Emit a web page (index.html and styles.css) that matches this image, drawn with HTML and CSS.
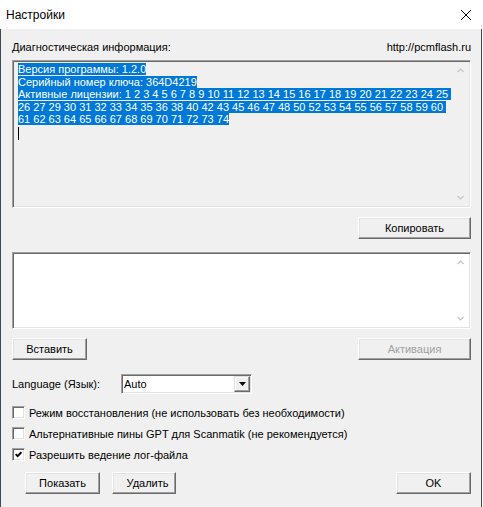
FILE: index.html
```html
<!DOCTYPE html>
<html lang="ru">
<head>
<meta charset="utf-8">
<title>Настройки</title>
<link rel="stylesheet" href="styles.css">
</head>
<body>
<div class="window">
  <div class="titlebar">
    <span class="title">Настройки</span>
    <svg class="close" width="10" height="10" viewBox="0 0 10 10"><path d="M0 0 L10 10 M10 0 L0 10" stroke="#000" stroke-width="1" fill="none"/></svg>
  </div>
  <div class="body">
    <div class="hdr"><span>Диагностическая информация:</span><span>http://pcmflash.ru</span></div>
    <div class="memo memo-info">
      <div class="memo-text">
        <div class="ln"><span class="sel">Версия программы: 1.2.0</span></div>
        <div class="ln"><span class="sel">Серийный номер ключа: 364D4219</span></div>
        <div class="ln"><span class="sel">Активные лицензии: 1 2 3 4 5 6 7 8 9 10 11 12 13 14 15 16 17 18 19 20 21 22 23 24 25 </span></div>
        <div class="ln"><span class="sel">26 27 29 30 31 32 33 34 35 36 38 40 42 43 45 46 47 48 50 52 53 54 55 56 57 58 59 60 </span></div>
        <div class="ln"><span class="sel">61 62 63 64 65 66 67 68 69 70 71 72 73 74</span></div>
        <div class="ln"><span class="caret"></span></div>
      </div>
      <div class="vscroll">
        <div class="arrow"><svg width="7" height="5" viewBox="0 0 7 5"><path d="M0.5 4 L3.5 1 L6.5 4" stroke="#c4c4c4" stroke-width="1.2" fill="none"/></svg></div>
        <div class="arrow"><svg width="7" height="5" viewBox="0 0 7 5"><path d="M0.5 1 L3.5 4 L6.5 1" stroke="#c4c4c4" stroke-width="1.2" fill="none"/></svg></div>
      </div>
    </div>
    <div class="row row-copy"><button class="btn w113">Копировать</button></div>
    <div class="memo memo-key">
      <div class="memo-text"></div>
      <div class="vscroll">
        <div class="arrow"><svg width="7" height="5" viewBox="0 0 7 5"><path d="M0.5 4 L3.5 1 L6.5 4" stroke="#c4c4c4" stroke-width="1.2" fill="none"/></svg></div>
        <div class="arrow"><svg width="7" height="5" viewBox="0 0 7 5"><path d="M0.5 1 L3.5 4 L6.5 1" stroke="#c4c4c4" stroke-width="1.2" fill="none"/></svg></div>
      </div>
    </div>
    <div class="row row-paste">
      <button class="btn w75">Вставить</button>
      <button class="btn w113" disabled>Активация</button>
    </div>
    <div class="lang">
      <span class="lang-label">Language (Язык):</span>
      <div class="combo sunken">
        <span class="combo-val">Auto</span>
        <div class="combo-btn"><svg width="7" height="4" viewBox="0 0 7 4"><path d="M0 0 L7 0 L3.5 4 Z" fill="#000"/></svg></div>
      </div>
    </div>
    <div class="check first"><span class="box sunken"></span><span>Режим восстановления (не использовать без необходимости)</span></div>
    <div class="check"><span class="box sunken"></span><span>Альтернативные пины GPT для Scanmatik (не рекомендуется)</span></div>
    <div class="check"><span class="box sunken"><svg width="7" height="7" viewBox="0 0 7 7"><path d="M0.6 3.2 L2.6 5.2 L6.4 1.2" stroke="#000" stroke-width="1.8" fill="none"/></svg></span><span>Разрешить ведение лог-файла</span></div>
    <div class="row row-bottom">
      <div class="group">
        <button class="btn w75">Показать</button>
        <button class="btn w64">Удалить</button>
      </div>
      <button class="btn w75">OK</button>
    </div>
  </div>
</div>
</body>
</html>
```
FILE: styles.css
```css
html, body {
  margin: 0;
  background: #fff;
}
.window {
  width: 482px;
  height: 507px;
  display: flex;
  flex-direction: column;
  font-family: "Liberation Sans", Arial, sans-serif;
  font-size: 11px;
  color: #000;
}
.titlebar {
  height: 29px;
  flex: none;
  display: flex;
  align-items: center;
  justify-content: space-between;
  padding: 0 11px 0 6px;
  background: #fff;
}
.title {
  font-size: 12px;
}
.close {
  display: block;
}
.body {
  flex: 1;
  background: #f0f0f0;
  border-left: 1px solid #3f4a56;
  border-right: 1px solid #3f4a56;
  padding: 12px 10px 0 11px;
  display: flex;
  flex-direction: column;
}
.hdr {
  height: 13px;
  line-height: 13px;
  display: flex;
  justify-content: space-between;
}
.memo, .sunken {
  box-sizing: border-box;
  border: 1px solid;
  border-color: #a0a0a0 #fff #fff #a0a0a0;
  box-shadow: inset 1px 1px #696969, inset -1px -1px #e3e3e3;
}
.memo {
  display: flex;
  padding: 1px;
}
.memo-info {
  margin-top: 6px;
  height: 148px;
  background: #f0f0f0;
}
.memo-key {
  margin-top: 13px;
  height: 77px;
  background: #fff;
}
.memo-text {
  flex: 1;
  padding: 1px 0 0 4px;
  overflow: hidden;
}
.ln {
  height: 12.5px;
  line-height: 12.5px;
  white-space: pre;
}
.sel {
  background: #0078d7;
  color: #fff;
}
.caret {
  display: inline-block;
  width: 1px;
  height: 13px;
  margin-top: 1px;
  background: #000;
  vertical-align: top;
}
.vscroll {
  width: 17px;
  display: flex;
  flex-direction: column;
  justify-content: space-between;
}
.arrow {
  height: 17px;
  display: flex;
  align-items: center;
  justify-content: center;
}
.arrow svg {
  display: block;
}
.row {
  display: flex;
  justify-content: space-between;
  align-items: center;
}
.row-copy {
  margin-top: 9px;
  justify-content: flex-end;
}
.row-paste {
  margin-top: 9px;
}
.btn {
  height: 22px;
  box-sizing: border-box;
  font: inherit;
  color: #000;
  background: #f0f0f0;
  border: 1px solid;
  border-color: #fff #696969 #696969 #fff;
  box-shadow: inset -1px -1px #a0a0a0, inset 1px 1px #e3e3e3;
  padding: 0;
}
.btn:disabled {
  color: #a0a0a0;
}
.w113 { width: 113px; }
.w75 { width: 75px; }
.w64 { width: 64px; padding-left: 7px; }
.lang {
  margin-top: 14px;
  display: flex;
  align-items: center;
  height: 20px;
}
.lang-label {
  width: 109px;
}
.combo {
  width: 131px;
  height: 20px;
  background: #fff;
  display: flex;
  align-items: center;
  padding: 1px 1px 1px 2px;
}
.combo-val {
  flex: 1;
}
.combo-btn {
  width: 16px;
  height: 16px;
  box-sizing: border-box;
  background: #f0f0f0;
  border: 1px solid;
  border-color: #e3e3e3 #696969 #696969 #e3e3e3;
  box-shadow: inset -1px -1px #a0a0a0, inset 1px 1px #fff;
  display: flex;
  align-items: center;
  justify-content: center;
}
.combo-btn svg { display: block; }
.check {
  display: flex;
  align-items: center;
  height: 21px;
}
.check.first {
  margin-top: 8px;
}
.box {
  width: 13px;
  height: 13px;
  background: #fff;
  margin-right: 4px;
  display: flex;
  align-items: center;
  justify-content: center;
  flex: none;
}
.box svg { display: block; }
.row-bottom {
  margin-top: 7px;
}
.group {
  display: flex;
  gap: 12px;
  margin-left: 13px;
}
```
